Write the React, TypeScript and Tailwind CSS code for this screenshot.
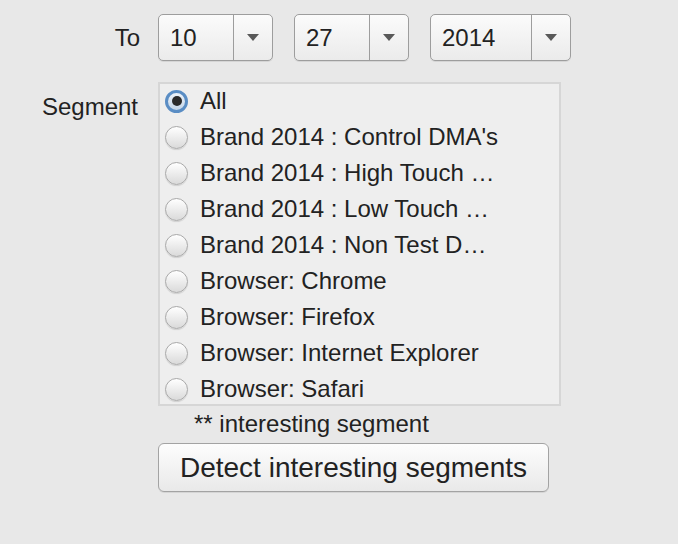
import React, { useState } from 'react';

const font = { fontFamily: '"Liberation Sans", Arial, sans-serif' };

const segments = [
  'All',
  'Brand 2014 : Control DMA\'s',
  'Brand 2014 : High Touch …',
  'Brand 2014 : Low Touch …',
  'Brand 2014 : Non Test D…',
  'Browser: Chrome',
  'Browser: Firefox',
  'Browser: Internet Explorer',
  'Browser: Safari',
];

const Select: React.FC<{ value: string; width: string }> = ({ value, width }) => (
  <div
    className={`flex h-[47px] ${width} rounded-[5px] border border-[#9d9d9d] bg-gradient-to-b from-[#fbfbfb] to-[#ebebeb] shadow-[0_1px_0_rgba(0,0,0,0.08)]`}
  >
    <span className="flex-1 flex items-center pl-[11px] text-[24px] text-[#222]">{value}</span>
    <span className="w-[39px] border-l border-[#9d9d9d] flex items-center justify-center">
      <svg width="12" height="7" viewBox="0 0 12 7">
        <path d="M0 0 H12 L6 7 Z" fill="#595959" />
      </svg>
    </span>
  </div>
);

const Radio: React.FC<{ checked: boolean }> = ({ checked }) =>
  checked ? (
    <span className="w-[23px] h-[23px] rounded-full border-[3px] border-[#5a8dc4] bg-gradient-to-b from-[#eef3f9] to-[#c3d5e8] flex items-center justify-center">
      <span className="w-[10px] h-[10px] rounded-full bg-[#2a2a2a]" />
    </span>
  ) : (
    <span className="w-[23px] h-[23px] rounded-full border border-[#a9a9a9] bg-gradient-to-b from-white to-[#dadada] shadow-[0_1px_1px_rgba(0,0,0,0.12)]" />
  );

export default function App() {
  const [selected, setSelected] = useState(0);

  return (
    <div className="min-h-[544px] w-[678px] bg-[#e8e8e8] pt-[14px]" style={font}>
      <div className="grid grid-cols-[140px_1fr] gap-x-[18px] gap-y-[21px] text-[#222]">
        <div className="flex items-center justify-end text-[24px]">To</div>
        <div className="flex gap-[21px]">
          <Select value="10" width="w-[115px]" />
          <Select value="27" width="w-[115px]" />
          <Select value="2014" width="w-[141px]" />
        </div>

        <div className="text-right text-[24px] leading-[28px] pt-[11px] pr-[2px]">Segment</div>
        <div>
          <div className="w-[403px] h-[324px] overflow-hidden border-2 border-[#d6d6d6] bg-[#eeeeee]">
            <div className="-mt-px">
              {segments.map((s, i) => (
                <div
                  key={s}
                  onClick={() => setSelected(i)}
                  className="h-[36px] flex items-center gap-[12px] pl-[5px] text-[24px] text-[#222] whitespace-nowrap cursor-default"
                >
                  <Radio checked={selected === i} />
                  <span>{s}</span>
                </div>
              ))}
            </div>
          </div>
          <div className="pl-[36px] text-[24px] leading-[28px] pt-[4px] text-[#222]">** interesting segment</div>
          <button
            type="button"
            className="mt-[5px] w-[391px] h-[49px] rounded-[6px] border border-[#a3a3a3] bg-gradient-to-b from-[#fdfdfd] to-[#e9e9e9] text-[28px] text-[#222] shadow-[0_1px_0_rgba(0,0,0,0.08)]"
          >
            Detect interesting segments
          </button>
        </div>
      </div>
    </div>
  );
}
